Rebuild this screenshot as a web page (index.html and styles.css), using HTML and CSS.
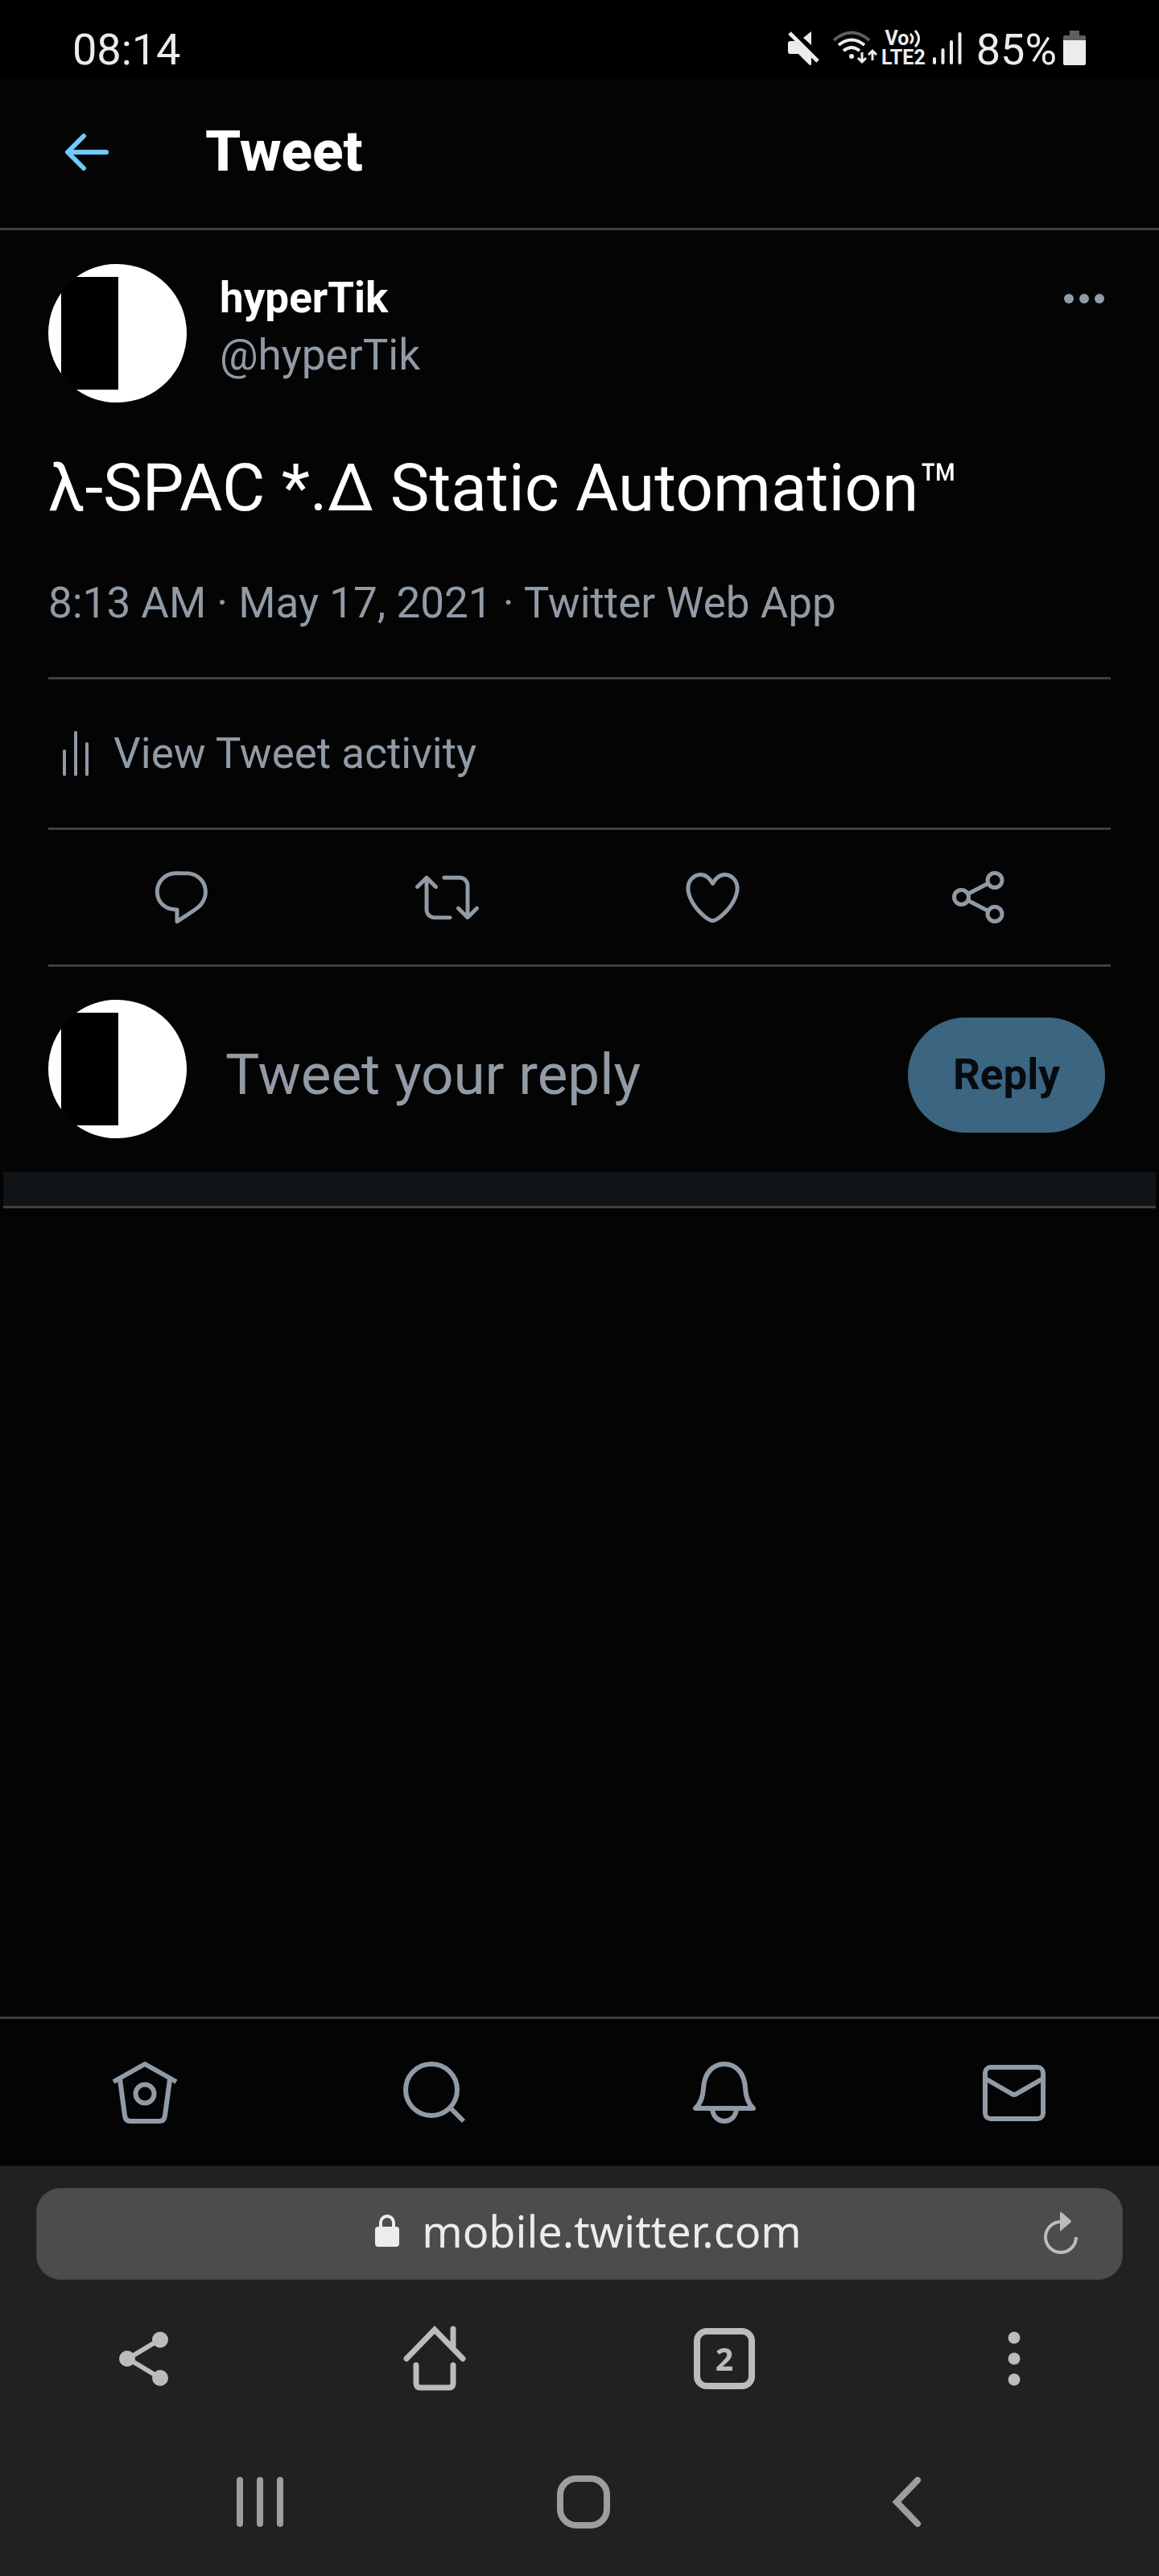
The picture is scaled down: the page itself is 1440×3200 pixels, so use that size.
FILE: index.html
```html
<!DOCTYPE html>
<html lang="en">
<head>
<meta charset="utf-8">
<meta name="viewport" content="width=device-width, initial-scale=1">
<title>Tweet</title>
<link rel="stylesheet" href="styles.css">
</head>
<body>
<div class="status-bar">
  <time class="clock">08:14</time>
  <div class="status-icons">
    <svg class="icon-mute" width="40" height="44" viewBox="0 0 40 44" aria-hidden="true">
      <path d="M29 1v17L19 9zM0 16q0-3 3-3h6l20 19v10q-1 2-3 0L13 29H3q-3 0-3-3z" fill="#ececec"/>
      <path d="M3 0l37 37" stroke="#000" stroke-width="5"/>
      <path d="M2 3l35 35" stroke="#ececec" stroke-width="5"/>
    </svg>
    <svg class="icon-wifi" width="56" height="44" viewBox="0 0 56 44" aria-hidden="true">
      <g fill="none" stroke-width="4">
        <path d="M2 12Q24-7 46 12" stroke="#5f5f5f"/>
        <path d="M8 18Q24 5 40 18M14 25Q24 17 34 25" stroke="#ececec"/>
        <path d="M37 27v12M32 34l5 5 5-5M50 37V26M45 30l5-5 5 5" stroke="#ececec" stroke-width="3"/>
      </g>
      <circle cx="24" cy="32" r="3" fill="#ececec"/>
    </svg>
    <div class="volte">
      <span class="volte-line">Vo<svg width="16" height="24" viewBox="0 0 16 24" aria-hidden="true"><path d="M2 6q6 6 0 12M8 2q9 10 0 20" fill="none" stroke="#ececec" stroke-width="3"/></svg></span>
      <span class="volte-line">LTE2</span>
    </div>
    <svg class="icon-signal" width="36" height="40" viewBox="0 0 36 40" aria-hidden="true">
      <path d="M2 33v5M12.500 22v16M23 12v26M33.500 2v36" stroke="#ececec" stroke-width="4" stroke-linecap="round"/>
    </svg>
    <span class="battery-level">85%</span>
    <svg class="icon-battery" width="28" height="43" viewBox="0 0 28 43" aria-hidden="true">
      <path d="M8 0h12v6h6q2 0 2 2v4H0V8q0-2 2-2h6z" fill="#5f5f5f"/>
      <path d="M0 12h28v29q0 2-2 2H2q-2 0-2-2z" fill="#ececec"/>
    </svg>
  </div>
</div>

<header class="page-header">
  <button class="icon-button back" aria-label="Back">
    <svg width="56" height="48" viewBox="0 0 56 48"><path d="M24 4L4 24l20 20M5 24h47" fill="none" stroke="#71c9f8" stroke-width="6" stroke-linecap="round" stroke-linejoin="round"/></svg>
  </button>
  <h1 class="page-title">Tweet</h1>
</header>

<main class="main">
  <article class="tweet">
    <div class="author">
      <svg class="avatar" viewBox="0 0 172 172" role="img" aria-label="hyperTik avatar">
        <circle cx="86" cy="86" r="86" fill="#fff"/>
        <path d="M16 35Q23 24 35 16H87V156H35Q23 147 16 136z" fill="#000"/>
        <path d="M0 0H35V16Q20 26 17 34zM0 172H35V156Q20 146 17 137z" fill="#040404"/>
        <path d="M35 16A86 86 0 0 1 86 0V16zM35 156A86 86 0 0 0 86 172V156z" fill="#fff"/>
      </svg>
      <div class="names">
        <a class="name" href="#">hyperTik</a>
        <a class="handle" href="#">@hyperTik</a>
      </div>
      <button class="icon-button more" aria-label="More">
        <svg width="52" height="14" viewBox="0 0 52 14" fill="#919ba6"><circle cx="7" cy="7" r="6"/><circle cx="26" cy="7" r="6"/><circle cx="45" cy="7" r="6"/></svg>
      </button>
    </div>
    <p class="tweet-text">λ-SPAC *.Δ Static Automation™</p>
    <p class="meta">8:13 AM · May 17, 2021 · Twitter Web App</p>
    <a class="activity" href="#">
      <svg width="40" height="60" viewBox="0 0 40 60" aria-hidden="true"><path d="M5 27v29M19 4v52M33 18v38" stroke="#919ba6" stroke-width="4" stroke-linecap="round"/></svg>
      View Tweet activity
    </a>
    <div class="actions">
      <button class="icon-button" aria-label="Reply to Tweet">
        <svg class="action-icon" viewBox="0 0 24 24"><path d="M14.046 2.242l-4.148-.01h-.002c-4.374 0-7.8 3.427-7.8 7.802 0 4.098 3.186 7.206 7.465 7.37v3.828c0 .108.044.286.12.403.142.225.384.347.632.347.138 0 .277-.038.402-.118.264-.168 6.473-4.14 8.088-5.506 1.902-1.61 3.04-3.97 3.043-6.312v-.017c-.006-4.367-3.43-7.787-7.8-7.788zm3.787 12.972c-1.134.96-4.862 3.405-6.772 4.643V16.67c0-.414-.335-.75-.75-.75h-.396c-3.66 0-6.318-2.476-6.318-5.886 0-3.534 2.768-6.302 6.3-6.302l4.147.01h.002c3.532 0 6.3 2.766 6.302 6.296-.003 1.91-.942 3.844-2.514 5.176z"/></svg>
      </button>
      <button class="icon-button" aria-label="Retweet">
        <svg class="action-icon" viewBox="0 0 24 24"><path d="M23.77 15.67c-.292-.293-.767-.293-1.06 0l-2.22 2.22V7.65c0-2.068-1.683-3.75-3.75-3.75h-5.85c-.414 0-.75.336-.75.75s.336.75.75.75h5.85c1.24 0 2.25 1.01 2.25 2.25v10.24l-2.22-2.22c-.293-.293-.768-.293-1.06 0s-.294.768 0 1.06l3.5 3.5c.145.147.337.22.53.22s.383-.072.53-.22l3.5-3.5c.294-.292.294-.767 0-1.06zm-10.66 3.28H7.26c-1.24 0-2.25-1.01-2.25-2.25V6.46l2.22 2.22c.148.147.34.22.532.22s.384-.073.53-.22c.293-.293.293-.768 0-1.06l-3.5-3.5c-.293-.294-.768-.294-1.06 0l-3.5 3.5c-.294.292-.294.767 0 1.06s.767.293 1.06 0l2.22-2.22V16.7c0 2.068 1.683 3.75 3.75 3.75h5.85c.414 0 .75-.336.75-.75s-.337-.75-.75-.75z"/></svg>
      </button>
      <button class="icon-button" aria-label="Like">
        <svg class="action-icon" viewBox="0 0 24 24"><path d="M12 21.638h-.014C9.403 21.59 1.95 14.856 1.95 8.478c0-3.064 2.525-5.754 5.403-5.754 2.29 0 3.83 1.58 4.646 2.73.814-1.148 2.354-2.73 4.645-2.73 2.88 0 5.404 2.69 5.404 5.755 0 6.376-7.454 13.11-10.037 13.157H12zM7.354 4.225c-2.08 0-3.903 1.988-3.903 4.255 0 5.74 7.034 11.596 8.55 11.658 1.518-.062 8.55-5.917 8.55-11.658 0-2.267-1.823-4.255-3.903-4.255-2.528 0-3.94 2.936-3.952 2.965-.23.562-1.156.562-1.387 0-.014-.03-1.425-2.965-3.954-2.965z"/></svg>
      </button>
      <button class="icon-button" aria-label="Share Tweet">
        <svg class="action-icon" viewBox="0 0 79 79"><g fill="none" stroke="#919ba6" stroke-width="5"><circle cx="18.500" cy="39.500" r="9"/><circle cx="60" cy="18.500" r="9"/><circle cx="60" cy="60.500" r="9"/><path d="M26.500 35.500l25-13M26.500 43.500l25 13"/></g></svg>
      </button>
    </div>
    <form class="reply">
      <svg class="avatar" viewBox="0 0 172 172" aria-hidden="true">
        <circle cx="86" cy="86" r="86" fill="#fff"/>
        <path d="M16 35Q23 24 35 16H87V156H35Q23 147 16 136z" fill="#000"/>
        <path d="M0 0H35V16Q20 26 17 34zM0 172H35V156Q20 146 17 137z" fill="#040404"/>
        <path d="M35 16A86 86 0 0 1 86 0V16zM35 156A86 86 0 0 0 86 172V156z" fill="#fff"/>
      </svg>
      <div class="compose">
        <input class="reply-input" type="text" placeholder="Tweet your reply" aria-label="Tweet your reply">
        <button class="reply-button" type="button">Reply</button>
      </div>
    </form>
  </article>
  <div class="separator"></div>
</main>

<nav class="app-nav" aria-label="Primary">
  <a href="#" aria-label="Home"><svg class="nav-icon" viewBox="0 0 84 84"><path d="M3 28L42 6l39 22M11 25l6 45q1 7 7 7h36q6 0 7-7l6-45"/><circle cx="42" cy="43" r="11.500"/></svg></a>
  <a href="#" aria-label="Search"><svg class="nav-icon" viewBox="0 0 84 84"><circle cx="38" cy="38" r="32"/><path d="M62 61l16 16"/></svg></a>
  <a href="#" aria-label="Notifications"><svg class="nav-icon" viewBox="0 0 84 84"><path d="M6 61h72Q69 53 68 36C67 17 56 6 42 6S17 17 16 36Q15 53 6 61zM27 62c1 10 8 15 15 15s14-5 15-15"/></svg></a>
  <a href="#" aria-label="Messages"><svg class="nav-icon" viewBox="0 0 84 84"><rect x="6" y="10" width="72" height="64" rx="7"/><path d="M6 24l33 19q3 2 6 0l33-19"/></svg></a>
</nav>

<footer class="browser">
  <div class="url-bar">
    <span></span>
    <div class="url">
      <svg width="30" height="40" viewBox="0 0 30 40" aria-hidden="true"><path d="M7 18v-8a8 8 0 0 1 16 0v8" fill="none" stroke="#ececec" stroke-width="4"/><rect y="15" width="30" height="25" rx="4" fill="#ececec"/></svg>
      <span class="url-text">mobile.twitter.com</span>
    </div>
    <button class="icon-button reload" aria-label="Reload">
      <svg width="44" height="54" viewBox="0 0 44 54"><path d="M22 12A19 19 0 1 0 41 31" fill="none" stroke="#bcbcbc" stroke-width="4"/><path d="M21 0q2 0 3 1l10 9q2 1 0 3L21 24z" fill="#bcbcbc"/></svg>
    </button>
  </div>
  <div class="toolbar">
    <button class="icon-button" aria-label="Share"><svg class="tool-icon" viewBox="0 0 84 84"><g fill="#bcbcbc"><path d="M21 42L61 18M21 42l40 24" stroke="#bcbcbc" stroke-width="6"/><circle cx="20" cy="42" r="10"/><circle cx="61" cy="18.500" r="10"/><circle cx="61" cy="66" r="10"/></g></svg></button>
    <button class="icon-button" aria-label="Home page"><svg class="tool-icon" viewBox="0 0 84 84"><path d="M7 42L42 6l35 36M65 5v23M19 50v22q0 6 5 6h36q5 0 5-6V50" fill="none" stroke="#bcbcbc" stroke-width="7" stroke-linecap="round"/></svg></button>
    <button class="icon-button tabs" aria-label="2 tabs">2</button>
    <button class="icon-button" aria-label="Menu"><svg class="tool-icon" viewBox="0 0 84 84" fill="#bcbcbc"><circle cx="42" cy="16" r="7.500"/><circle cx="42" cy="42" r="7.500"/><circle cx="42" cy="68" r="7.500"/></svg></button>
  </div>
  <div class="system-nav">
    <button class="icon-button" aria-label="Recent apps"><svg width="66" height="66" viewBox="0 0 66 66"><path d="M8 6v54M33 6v54M58 6v54" stroke="#9e9e9e" stroke-width="8" stroke-linecap="round"/></svg></button>
    <button class="icon-button" aria-label="Home screen"><svg width="66" height="66" viewBox="0 0 66 66"><rect x="4" y="4" width="58" height="58" rx="20" fill="none" stroke="#9e9e9e" stroke-width="8"/></svg></button>
    <button class="icon-button" aria-label="System back"><svg width="66" height="66" viewBox="0 0 66 66"><path d="M46 6L20 33l26 27" fill="none" stroke="#9e9e9e" stroke-width="8" stroke-linecap="round"/></svg></button>
  </div>
</footer>
</body>
</html>
```

FILE: styles.css
```css
* { box-sizing: border-box; }

body {
  margin: 0;
  min-height: 100vh;
  display: flex;
  flex-direction: column;
  background: #040404;
  color: #fff;
  font-family: Roboto, "Liberation Sans", sans-serif;
  font-size: 53px;
  line-height: 71px;
}

svg { display: block; flex: none; }
a { color: inherit; text-decoration: none; }
h1, p { margin: 0; }

.icon-button {
  display: flex;
  align-items: center;
  justify-content: center;
  padding: 0;
  border: 0;
  background: none;
  color: inherit;
  font: inherit;
}

/* Phone status bar */
.status-bar {
  display: flex;
  justify-content: space-between;
  align-items: center;
  height: 97px;
  padding: 22px 91px 0 90px;
  background: #000;
  color: #ececec;
  font-size: 54px;
}
.clock, .battery-level { padding-top: 4px; }
.status-icons { display: flex; align-items: center; }
.icon-wifi { margin-left: 15px; }
.volte {
  margin-left: 5px;
  font-size: 25px;
  font-weight: 700;
  line-height: 23px;
}
.volte-line { display: flex; justify-content: center; }
.icon-signal { margin-left: 9px; }
.battery-level { margin: 0 8px 0 18px; }

/* Page header */
.page-header {
  display: flex;
  align-items: center;
  height: 189px;
  padding: 0 0 2px 80px;
  border-bottom: 3px solid #3d4144;
}
.page-title {
  margin-left: 119px;
  padding-bottom: 2px;
  font-size: 71px;
  font-weight: 800;
  line-height: 92px;
}

/* Tweet */
.main { flex: 1; }
.tweet { padding: 42px 60px 0; }
.author { display: flex; gap: 41px; }
.avatar { width: 172px; height: 172px; }
.names {
  flex: 1;
  display: flex;
  flex-direction: column;
  align-items: flex-start;
  padding-top: 7px;
}
.name { font-weight: 700; }
.handle, .meta, .activity { color: #919ba6; }
.more { height: 86px; margin-right: 7px; }
.tweet-text {
  margin-top: 53px;
  font-size: 82px;
  line-height: 106px;
}
.meta { margin-top: 55px; }
.activity {
  display: flex;
  align-items: center;
  gap: 26px;
  height: 190px;
  margin-top: 56px;
  padding-left: 15px;
  border-top: 3px solid #3d4144;
  border-bottom: 3px solid #3d4144;
}
.actions {
  display: grid;
  grid-template-columns: repeat(4, 1fr);
  height: 170px;
  border-bottom: 3px solid #3d4144;
}
.action-icon { width: 79px; height: 79px; fill: #919ba6; }

.reply {
  display: flex;
  gap: 48px;
  padding: 41px 7px 28px 0;
}
.compose {
  flex: 1;
  min-width: 0;
  display: flex;
  align-items: center;
  height: 186px;
}
.reply-input {
  flex: 1;
  min-width: 0;
  padding: 0;
  border: 0;
  outline: 0;
  background: none;
  color: #fff;
  font: inherit;
  font-size: 71px;
  line-height: 92px;
}
.reply-input::placeholder { color: #919ba6; opacity: 1; }
.reply-button {
  height: 143px;
  padding: 0 56px;
  border: 0;
  border-radius: 72px;
  background: #3b6580;
  color: #070b10;
  font: inherit;
  font-weight: 700;
}
.separator {
  height: 45px;
  margin: 0 4px;
  border-bottom: 3px solid #3d4144;
  background: #101417;
}

/* Twitter tab bar */
.app-nav {
  display: grid;
  grid-template-columns: repeat(4, 1fr);
  height: 185px;
  padding-top: 2px;
  border-top: 3px solid #3a4145;
}
.app-nav a { display: flex; align-items: center; justify-content: center; }
.nav-icon {
  width: 84px;
  height: 84px;
  fill: none;
  stroke: #919ba6;
  stroke-width: 6px;
  stroke-linejoin: round;
}

/* Browser chrome */
.browser {
  padding-bottom: 12px;
  border-top: 2px solid #1c1c1c;
  background: #212121;
  color: #bcbcbc;
}
.url-bar {
  display: grid;
  grid-template-columns: 1fr auto 1fr;
  align-items: center;
  height: 114px;
  margin: 26px 45px 0;
  padding: 0 54px;
  border: 1px solid #444;
  border-radius: 30px;
  background: #4c4c4c;
}
.url {
  display: flex;
  align-items: center;
  gap: 28px;
  padding: 0 0 8px 22px;
  color: #ececec;
  font-family: "Noto Sans", "Open Sans", sans-serif;
  font-size: 54px;
}
.reload { justify-self: end; }
.toolbar {
  display: grid;
  grid-template-columns: repeat(4, 1fr);
  align-items: center;
  height: 196px;
}
.tool-icon { width: 84px; height: 84px; }
.tabs {
  justify-self: center;
  width: 76px;
  height: 76px;
  border: 8px solid #bcbcbc;
  border-radius: 16px;
  font-family: "Noto Sans", "Open Sans", sans-serif;
  font-size: 39px;
  font-weight: 700;
  line-height: 60px;
}
.system-nav {
  display: grid;
  grid-template-columns: repeat(3, 1fr);
  height: 160px;
  padding: 0 112px 0 122px;
}
```
